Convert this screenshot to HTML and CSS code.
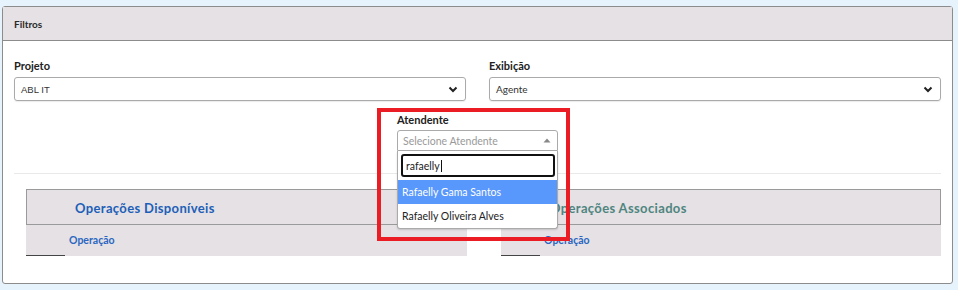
FILE: index.html
```html
<!DOCTYPE html>
<html lang="pt-BR">
<head>
  <meta charset="UTF-8"/>
  <title>Filtros</title>
  <link rel="stylesheet" href="styles.css">
</head>
<body>
  <div class="page">
    <div class="card">
      <div class="card-header">Filtros</div>
      <div class="card-body">
        <div class="row">
          <div class="field">
            <label>Projeto</label>
            <div class="select">
              <span class="select-value arial">ABL IT</span>
              <svg class="chevron" width="10" height="8" viewBox="0 0 10 8"><path d="M1.5 2.5 L5 6 L8.5 2.5" fill="none" stroke="#222" stroke-width="2"/></svg>
            </div>
          </div>
          <div class="field">
            <label>Exibição</label>
            <div class="select">
              <span class="select-value">Agente</span>
              <svg class="chevron" width="10" height="8" viewBox="0 0 10 8"><path d="M1.5 2.5 L5 6 L8.5 2.5" fill="none" stroke="#222" stroke-width="2"/></svg>
            </div>
          </div>
        </div>

        <div class="row-center">
          <div class="field-small">
            <label>Atendente</label>
            <div class="s2-box">
              <span class="s2-placeholder">Selecione Atendente</span>
              <svg class="s2-arrow" width="8" height="5" viewBox="0 0 8 5"><path d="M0.5 4.5 L4 0.5 L7.5 4.5 Z" fill="#888"/></svg>
            </div>
            <div class="s2-dropdown">
              <div class="s2-search"><span>rafaelly</span><i class="caret"></i></div>
              <div class="s2-option active">Rafaelly Gama Santos</div>
              <div class="s2-option">Rafaelly Oliveira Alves</div>
            </div>
            <div class="highlight"></div>
          </div>
        </div>

        <hr class="divider">

        <div class="tables">
          <div class="table table-left">
            <div class="th-title blue">Operações Disponíveis</div>
            <div class="th-sub"><span>Operação</span></div>
          </div>
          <div class="table table-right">
            <div class="th-title green">Operações Associados</div>
            <div class="th-sub"><span>Operação</span></div>
          </div>
        </div>
      </div>
    </div>
  </div>
</body>
</html>
```

FILE: styles.css
```css
body { margin: 0; background: #fff; font-family: Lato, "Noto Sans", sans-serif; color: #222; }
.page { width: 958px; height: 290px; background: #e7f3fc; padding: 6px 5px 6px 2px; box-sizing: border-box; }
.card { height: 278px; background: #fff; border: 1px solid #8c8c8c; border-radius: 3px; box-sizing: border-box; }
.card-header { height: 33px; background: #e5e1e4; border-bottom: 1px solid #8c8c8c; padding-left: 11px; font-size: 10px; font-weight: bold; line-height: 35px; color: #2a2a2a; }
.card-body { padding: 0 11px; }

.row { display: flex; gap: 23px; padding-top: 18px; }
.field { flex: 1; }
label { display: block; font-size: 11px; font-weight: bold; color: #222; line-height: 13px; margin-bottom: 5px; }
.select { height: 24px; border: 1px solid #aaa; border-radius: 3px; box-sizing: border-box; display: flex; align-items: center; justify-content: space-between; padding: 0 7px 0 6px; box-shadow: 0 1px 1px rgba(0,0,0,0.08); }
.select-value { font-size: 10px; color: #333; }
.arial { font-family: "Liberation Sans", Arial, sans-serif; font-size: 9.5px; }

.row-center { display: flex; justify-content: center; padding-top: 12px; }
.field-small { width: 161px; position: relative; }
.field-small label { margin-bottom: 4px; }
.s2-box { height: 21px; border: 1px solid #aaa; border-radius: 3px 3px 0 0; box-sizing: border-box; display: flex; align-items: center; justify-content: space-between; padding: 0 6px 0 5px; }
.s2-placeholder { font-size: 10.5px; color: #999; }
.s2-dropdown { position: absolute; left: 0; right: 0; top: 38px; background: #fff; border: 1px solid #aaa; border-top: none; border-radius: 0 0 3px 3px; box-shadow: 0 1px 2px rgba(0,0,0,0.15); z-index: 2; }
.s2-search { margin: 3px 2px 3px 3px; height: 23px; border: 2px solid #111; border-radius: 3px; box-sizing: border-box; display: flex; align-items: center; padding-left: 3px; font-size: 10.5px; color: #222; }
.caret { display: inline-block; width: 1px; height: 12px; background: #111; margin-left: 1px; }
.s2-option { height: 24px; line-height: 25px; padding-left: 4px; font-size: 10.5px; color: #222; }
.s2-option.active { background: #5897fb; color: #fff; margin-top: 1px; }
.highlight { position: absolute; left: -20px; top: -5px; width: 185px; height: 125px; border: 4px solid #ec1c24; z-index: 3; }

.divider { border: none; border-top: 1px solid #e9e9e9; margin: 22px 0 0; }

.tables { display: flex; padding-top: 15px; }
.table { background: #e5e1e4; }
.table-left { width: 441px; margin-left: 12px; }
.table-right { width: 440px; margin-left: 34px; }
.th-title { height: 36px; border: 1px solid #9a9a9a; box-sizing: border-box; font-size: 13px; font-weight: bold; line-height: 37px; padding-left: 48px; letter-spacing: 0.35px; }
.blue { color: #1d5fb8; }
.green { color: #4f8580; }
.th-sub { height: 31px; position: relative; padding-left: 43px; font-size: 10.5px; font-weight: bold; color: #2b67c1; line-height: 31px; }
.th-sub::after { content: ""; position: absolute; left: 0; bottom: 0; width: 39px; height: 1px; background: #444; }
```
